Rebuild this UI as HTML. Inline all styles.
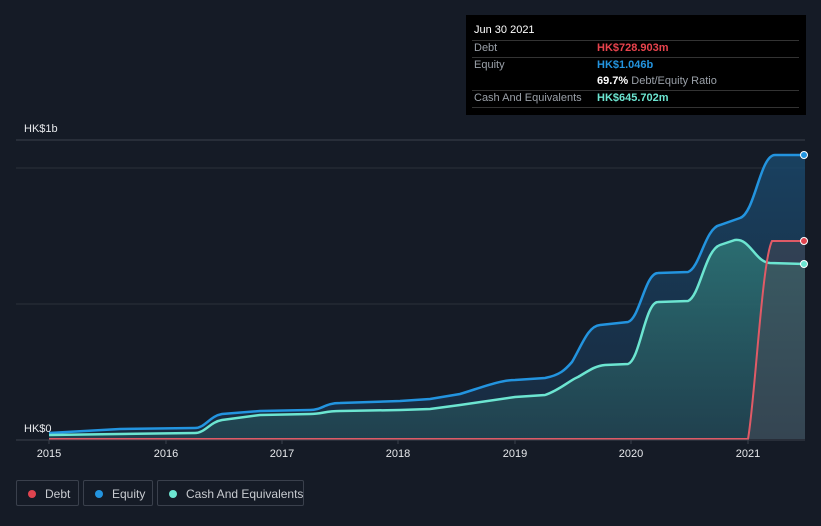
<!DOCTYPE html>
<html><head><meta charset="utf-8"><style>
body{margin:0;width:821px;height:526px;background:#151b26;font-family:"Liberation Sans",sans-serif;overflow:hidden;position:relative}
.tt{position:absolute;left:466px;top:15px;width:340px;height:100px;background:#000;}
.tt div{position:absolute;font-size:11px;white-space:nowrap}
.leg{position:absolute;top:480px;height:26px;border:1px solid #3a404c;border-radius:2px;color:#c8cbd0;font-size:12px;line-height:26px;box-sizing:border-box;white-space:nowrap}
.leg i{position:absolute;left:11px;top:9px;width:8px;height:8px;border-radius:50%}
</style></head><body>
<svg width="821" height="526" style="position:absolute;left:0;top:0">
<defs>
<linearGradient id="ge" x1="0" y1="0" x2="0" y2="1"><stop offset="0" stop-color="#1a4a6e" stop-opacity=".8"/><stop offset="1" stop-color="#1a3450" stop-opacity=".6"/></linearGradient>
<linearGradient id="gc" x1="0" y1="0" x2="0" y2="1"><stop offset="0" stop-color="#2f7a78" stop-opacity=".8"/><stop offset="1" stop-color="#244a55" stop-opacity=".7"/></linearGradient>
</defs>
<line x1="16" y1="140" x2="805" y2="140" stroke="#3a404c"/>
<line x1="16" y1="168" x2="805" y2="168" stroke="#2a303b"/>
<line x1="16" y1="304" x2="805" y2="304" stroke="#2a303b"/>
<path d="M49,433 L120,429 L195,428 C205,428 210,416 222,414 L260,411 L310,410 C322,410 325,403 340,403 L400,401 L430,399 L460,394 C480,388 500,380 515,380 L545,378 C560,375 565,370 572,362 C582,345 588,326 600,325 L628,322 C640,318 645,273 658,273 L688,272 C700,268 705,228 720,225 L740,218 C755,213 760,155 775,155 L805,155 L805,439 L49,439 Z" fill="url(#ge)"/>
<path d="M49,435 L195,433 C205,433 210,422 222,420 L260,415 L310,414 C322,414 325,411 340,411 L400,410 L430,409 L460,405 L515,397 L545,395 C560,390 570,380 578,377 C590,370 595,366 605,365 L628,364 C640,360 645,302 658,302 L688,301 C700,296 705,250 720,245 L735,240 C750,238 755,262 770,263 L805,264 L805,439 L49,439 Z" fill="url(#gc)"/>
<path d="M748,439 C755,400 762,260 772,241 L805,241 L805,439 Z" fill="#4a4a55" fill-opacity=".5"/>
<path d="M49,433 L120,429 L195,428 C205,428 210,416 222,414 L260,411 L310,410 C322,410 325,403 340,403 L400,401 L430,399 L460,394 C480,388 500,380 515,380 L545,378 C560,375 565,370 572,362 C582,345 588,326 600,325 L628,322 C640,318 645,273 658,273 L688,272 C700,268 705,228 720,225 L740,218 C755,213 760,155 775,155 L805,155" fill="none" stroke="#2394df" stroke-width="2.5"/>
<path d="M49,435 L195,433 C205,433 210,422 222,420 L260,415 L310,414 C322,414 325,411 340,411 L400,410 L430,409 L460,405 L515,397 L545,395 C560,390 570,380 578,377 C590,370 595,366 605,365 L628,364 C640,360 645,302 658,302 L688,301 C700,296 705,250 720,245 L735,240 C750,238 755,262 770,263 L805,264" fill="none" stroke="#6ce5d1" stroke-width="2.5"/>
<path d="M49,439 L748,439 C755,400 762,260 772,241 L805,241" fill="none" stroke="#e05a66" stroke-width="2"/>
<line x1="16" y1="440" x2="805" y2="440" stroke="#3a404c"/>
<g stroke="#3a404c"><line x1="49" y1="440" x2="49" y2="444"/><line x1="166" y1="440" x2="166" y2="444"/><line x1="282" y1="440" x2="282" y2="444"/><line x1="398" y1="440" x2="398" y2="444"/><line x1="515" y1="440" x2="515" y2="444"/><line x1="631" y1="440" x2="631" y2="444"/><line x1="748" y1="440" x2="748" y2="444"/></g>
<circle cx="804" cy="155" r="3.5" fill="#2394df" stroke="#fff" stroke-width="1"/>
<circle cx="804" cy="241" r="3.5" fill="#e0444f" stroke="#fff" stroke-width="1"/>
<circle cx="804" cy="264" r="3.5" fill="#6ce5d1" stroke="#fff" stroke-width="1"/>
<g font-family="Liberation Sans" font-size="11" fill="#e6e8eb" text-anchor="middle">
<text x="49" y="457">2015</text><text x="166" y="457">2016</text><text x="282" y="457">2017</text><text x="398" y="457">2018</text><text x="515" y="457">2019</text><text x="631" y="457">2020</text><text x="748" y="457">2021</text>
</g>
<text x="24" y="132" font-family="Liberation Sans" font-size="11" fill="#e6e8eb">HK$1b</text>
<text x="24" y="432" font-family="Liberation Sans" font-size="11" fill="#e6e8eb">HK$0</text>
</svg>
<div class="tt">
<div style="left:8px;top:9px;color:#fff">Jun 30 2021</div>
<div style="left:6px;top:25px;width:327px;border-top:1px solid #333"></div>
<div style="left:8px;top:27px;color:#9aa0a8">Debt</div>
<div style="left:131px;top:27px;color:#e8434d;font-weight:bold">HK$728.903m</div>
<div style="left:6px;top:42px;width:327px;border-top:1px solid #333"></div>
<div style="left:8px;top:44px;color:#9aa0a8">Equity</div>
<div style="left:131px;top:44px;color:#2394df;font-weight:bold">HK$1.046b</div>
<div style="left:131px;top:60px;color:#9aa0a8"><b style="color:#fff">69.7%</b> Debt/Equity Ratio</div>
<div style="left:6px;top:75px;width:327px;border-top:1px solid #333"></div>
<div style="left:8px;top:77px;color:#9aa0a8">Cash And Equivalents</div>
<div style="left:131px;top:77px;color:#6ce5d1;font-weight:bold">HK$645.702m</div>
<div style="left:6px;top:92px;width:327px;border-top:1px solid #333"></div>
</div>
<div class="leg" style="left:16px;width:63px"><i style="background:#e0444f"></i><span style="position:absolute;left:28px">Debt</span></div>
<div class="leg" style="left:83px;width:70px"><i style="background:#2394df"></i><span style="position:absolute;left:28px">Equity</span></div>
<div class="leg" style="left:157px;width:147px"><i style="background:#6ce5d1"></i><span style="position:absolute;left:28px">Cash And Equivalents</span></div>
</body></html>
